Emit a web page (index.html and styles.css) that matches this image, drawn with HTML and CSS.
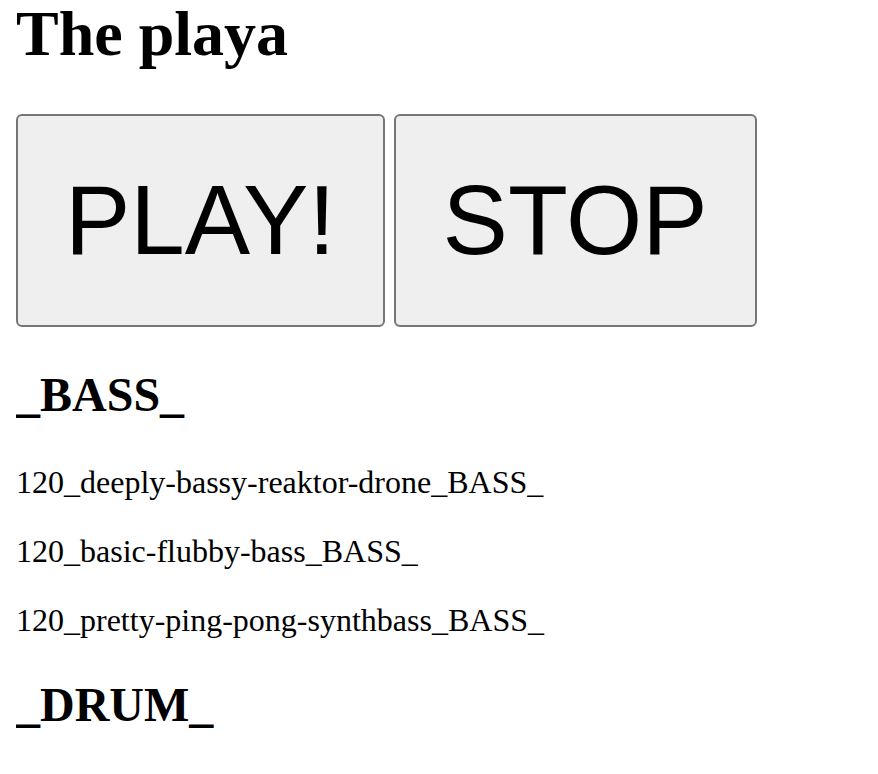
FILE: index.html
```html
<!DOCTYPE html>
<html lang="en">
<head>
<meta charset="utf-8">
<title>The playa</title>
<link rel="stylesheet" href="styles.css">
</head>
<body>
<h1 class="title">The playa</h1>
<div class="controls">
  <button class="btn" type="button">PLAY!</button>
  <button class="btn" type="button">STOP</button>
</div>
<section class="group">
  <h2 class="group-title">_BASS_</h2>
  <p class="track">120_deeply-bassy-reaktor-drone_BASS_</p>
  <p class="track">120_basic-flubby-bass_BASS_</p>
  <p class="track">120_pretty-ping-pong-synthbass_BASS_</p>
</section>
<section class="group">
  <h2 class="group-title">_DRUM_</h2>
</section>
</body>
</html>
```
FILE: styles.css
```css
html, body {
  background: #ffffff;
}
body {
  margin: 0 16px;
  font-family: "Liberation Serif", "Times New Roman", serif;
  font-size: 32px;
  color: #000000;
}
.title {
  font-size: 64px;
  font-weight: bold;
  line-height: 67px;
  margin: 0 0 47px;
}
.controls {
  display: flex;
  gap: 9px;
  margin-bottom: 40px;
}
.btn {
  font-family: "Liberation Sans", Arial, Helvetica, sans-serif;
  font-size: 98px;
  line-height: 113px;
  padding: 48px 47px;
  margin: 0;
  color: #000000;
  background: #efefef;
  border: 2px solid #767676;
  border-radius: 6px;
}
.group-title {
  font-size: 48px;
  font-weight: bold;
  line-height: 56px;
  margin: 38px 0 41px;
}
.track {
  font-size: 32px;
  line-height: 37px;
  margin: 32px 0;
}
```
